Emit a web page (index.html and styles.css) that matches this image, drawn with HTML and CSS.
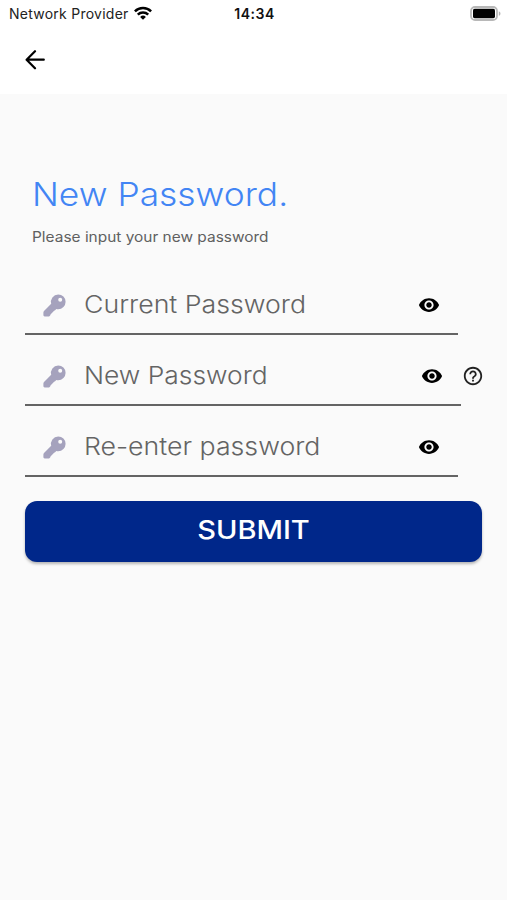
FILE: index.html
```html
<!DOCTYPE html>
<html lang="en">
<head>
<meta charset="utf-8">
<title>New Password</title>
<link rel="stylesheet" href="styles.css">
</head>
<body>
<svg class="defs" aria-hidden="true">
  <symbol id="key" viewBox="0 0 23 23"><path fill-rule="evenodd" d="M15.200.4a7.400 7.400 0 0 1 0 14.800c-.7 0-1.300-.1-1.900-.2l-1.200 1.300c-.3.3-.6.400-1 .4L7.500 20.600c-.2 1.200-.8 1.800-1.700 1.800H1.700C.9 22.400.4 21.900.4 21.100v-2.600c0-.6.2-1.100.6-1.500l7.200-7.200A7.400 7.400 0 0 1 15.200.4zM17.200 3.800a2 2 0 1 0 0 4 2 2 0 0 0 0-4z"/></symbol>
  <symbol id="eye" viewBox="0 0 24 24"><path d="M12 4.500C7 4.500 2.730 7.610 1 12c1.730 4.390 6 7.500 11 7.500s9.270-3.110 11-7.500c-1.730-4.390-6-7.500-11-7.500zM12 17c-2.760 0-5-2.240-5-5s2.240-5 5-5 5 2.240 5 5-2.240 5-5 5zm0-8c-1.660 0-3 1.340-3 3s1.340 3 3 3 3-1.340 3-3-1.340-3-3-3z"/></symbol>
</svg>
<header class="top">
  <div class="status">
    <div class="carrier"><span class="carrier-name">Network Provider</span>
      <svg class="wifi" viewBox="0 0 18 14" fill="none" stroke="#000" stroke-width="2.500"><path d="M.9 5.300a11.500 11.500 0 0 1 16.200 0M3.800 8.600a7.400 7.400 0 0 1 10.400 0"/><path d="M9 13.700 6.100 10.900a4.200 4.200 0 0 1 5.800 0z" fill="#000" stroke="none"/></svg>
    </div>
    <span class="time">14:34</span>
    <svg class="battery" viewBox="0 0 31 15"><rect x="1" y="1" width="26" height="13" rx="4" fill="#fff" stroke="#b8b8b8" stroke-width="1.800"/><rect x="3" y="2.800" width="22" height="9.400" rx="1.600" fill="#000"/><path d="M28.800 5.200c2.200.8 2.200 3.800 0 4.600z" fill="#b4b4b4"/></svg>
  </div>
  <svg class="back" viewBox="0 0 20 20" fill="none" stroke="#000" stroke-width="2.200" stroke-linecap="round" stroke-linejoin="round"><path d="M18.800 9.700H1.800M10 1.200 1.600 9.700l8.400 8.600"/></svg>
</header>
<main class="content">
  <h1 class="title"><span>New Password.</span></h1>
  <p class="subtitle"><span>Please input your new password</span></p>
  <form class="form">
    <div class="row"><div class="field">
      <svg class="key"><use href="#key"/></svg><span class="label">Current Password</span><svg class="eye"><use href="#eye"/></svg>
    </div></div>
    <div class="row wide"><div class="field">
      <svg class="key"><use href="#key"/></svg><span class="label new">New Password</span><svg class="eye"><use href="#eye"/></svg>
    </div>
      <svg class="help" viewBox="0 0 24 24"><path d="M11 18h2v-2h-2v2zm1-16C6.480 2 2 6.480 2 12s4.480 10 10 10 10-4.480 10-10S17.520 2 12 2zm0 18c-4.410 0-8-3.590-8-8s3.590-8 8-8 8 3.590 8 8-3.590 8-8 8zm0-14c-2.210 0-4 1.790-4 4h2c0-1.100.9-2 2-2s2 .9 2 2c0 2-3 1.750-3 5h2c0-2.250 3-2.500 3-5 0-2.210-1.790-4-4-4z"/></svg>
    </div>
    <div class="row"><div class="field">
      <svg class="key"><use href="#key"/></svg><span class="label">Re-enter password</span><svg class="eye"><use href="#eye"/></svg>
    </div></div>
    <button class="submit" type="button"><span>SUBMIT</span></button>
  </form>
</main>
</body>
</html>
```
FILE: styles.css
```css
* { box-sizing: border-box; }
body {
  margin: 0;
  height: 900px;
  overflow: hidden;
  background: #fafafa;
  font-family: Inter, "Open Sans", sans-serif;
  color: #000;
}
.defs { display: none; }
svg { display: block; flex: none; }
.top { height: 94px; background: #fff; }
.status {
  height: 27px;
  padding: 0 6px 0 9px;
  display: grid;
  grid-template-columns: 1fr auto 1fr;
  align-items: center;
}
.carrier { display: flex; align-items: center; gap: 5px; }
.carrier-name { font-size: 14px; letter-spacing: 0.25px; white-space: nowrap; color: #222; }
.wifi { width: 18px; height: 14px; margin-top: -2px; }
.time { margin-left: -1px; font-size: 14px; font-weight: 600; letter-spacing: 0.5px; color: #111; }
.battery { width: 31px; height: 15px; justify-self: end; }
.back { width: 20px; height: 20px; margin: 23px 0 0 25px; }
.content { padding: 81px 25px 0; }
.title {
  margin: 0 0 0 7px;
  height: 40px;
  line-height: 40px;
  font-size: 32.5px;
  font-weight: 300;
  color: #4285f4;
  white-space: nowrap;
}
.title span,
.subtitle span { display: inline-block; transform-origin: left; }
.title span { transform: scaleX(1.088); }
.subtitle {
  margin: 12px 0 0 7px;
  height: 20px;
  line-height: 20px;
  font-size: 14px;
  color: #606060;
}
.subtitle span { transform: scaleX(1.102); }
.form { margin-top: 27px; }
.row { display: flex; height: 71px; padding-right: 24px; }
.row.wide { padding-right: 0; }
.field {
  flex: 1;
  height: 61px;
  padding: 0 18px 0 18px;
  display: flex;
  align-items: center;
  border-bottom: 2px solid #646464;
}
.key { width: 23px; height: 23px; fill: #a5a2bd; margin-top: 3px; }
.label {
  flex: 1;
  margin: 3px 0 0 18px;
  font-size: 24px;
  font-weight: 300;
  line-height: 32px;
  color: #646464;
  white-space: nowrap;
  transform: scaleX(1.112);
  transform-origin: left;
}
.label.new { transform: scaleX(1.099); }
.eye { width: 22px; height: 22px; margin-top: 3px; }
.help { width: 22px; height: 22px; margin: 20px -2px 0 1px; fill: #222; }
.submit {
  display: block;
  width: 100%;
  height: 61px;
  margin-top: 14px;
  padding: 0 0 4px;
  border: 0;
  border-radius: 12px;
  background: #00278a;
  box-shadow: 0 2px 3px rgba(0, 0, 0, 0.28);
  color: #fff;
  font-family: inherit;
  font-size: 25px;
  font-weight: 500;
}
.submit span { display: inline-block; transform: scaleX(1.16); }
```
